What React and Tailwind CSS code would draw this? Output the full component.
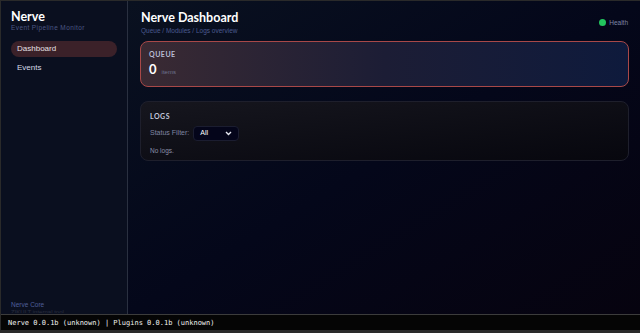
export default function App() {
  return (
    <div className="w-[640px] h-[333px] flex flex-col bg-[#2a2a2a] overflow-hidden" style={{ fontFamily: '"Liberation Sans", Arial, sans-serif' }}>
      <div className="flex flex-1 min-h-0 ml-[1px] mt-[1px]">
        <aside className="w-[127px] shrink-0 bg-[#0a0f1f] border-r border-[#2a3040] flex flex-col px-[10px] pt-[9px] relative">
          <div className="text-white font-bold text-[12.5px] leading-[13px]" style={{ fontFamily: 'Lato, sans-serif' }}>Nerve</div>
          <div className="text-[#4a5784] text-[6.5px] leading-[9px] tracking-[0.4px]">Event Pipeline Monitor</div>
          <nav className="mt-[9px] flex flex-col gap-[3px]">
            <div className="h-[16px] rounded-full bg-[#3b2129] text-[#e6e0e4] text-[8px] flex items-center pl-[6px]">Dashboard</div>
            <div className="h-[16px] text-[#d6dae6] text-[8px] flex items-center pl-[6px]">Events</div>
          </nav>
          <div className="mt-auto mb-[1px] relative">
            <div className="text-[#4f5f9a] text-[6.5px] leading-[8px]">Nerve Core</div>
            <div className="text-[#2a2f40] text-[6px] leading-[6px] h-[4px] overflow-hidden">ZIKULT internal tool</div>
          </div>
        </aside>
        <main className="flex-1 bg-gradient-to-br from-[#0a1120] via-[#04071a] to-[#06030f] px-[12px] pt-[9px] pr-[11px]">
          <div className="flex items-start justify-between">
            <div className="pl-[1px]">
              <div className="text-white font-bold text-[12.5px] leading-[16px]" style={{ fontFamily: 'Lato, sans-serif' }}>Nerve Dashboard</div>
              <div className="text-[#4b5a8f] text-[6.5px] leading-[9px]">Queue / Modules / Logs overview</div>
            </div>
            <div className="flex items-center gap-[3px] mt-[8px] mr-[1px]">
              <span className="w-[7px] h-[7px] rounded-full bg-[#22c55e]"></span>
              <span className="text-[#7d86a6] text-[6.5px]">Health</span>
            </div>
          </div>
          <section className="mt-[6px] h-[46px] rounded-[8px] border border-[#a84848] bg-gradient-to-r from-[#3a2a33] via-[#1c1d35] to-[#0e1a3c] px-[8px] pt-[7px]">
            <div className="text-[#b8bcd4] font-bold text-[7px] leading-[10px] tracking-[0.5px]" style={{ fontFamily: 'Lato, sans-serif' }}>QUEUE</div>
            <div className="flex items-baseline gap-[5px] mt-[2px]">
              <span className="text-white font-bold text-[13px] leading-[16px]" style={{ fontFamily: 'Lato, sans-serif' }}>0</span>
              <span className="text-[#6e7390] text-[6px]">items</span>
            </div>
          </section>
          <section className="mt-[14px] h-[60px] rounded-[8px] border border-[#1e1f2c] bg-gradient-to-br from-[#16161e] to-[#07070e] px-[9px] pt-[9px]">
            <div className="text-[#c4c8dc] font-bold text-[7px] leading-[10px] tracking-[0.5px]" style={{ fontFamily: 'Lato, sans-serif' }}>LOGS</div>
            <div className="flex items-center gap-[4px] mt-[5px]">
              <span className="text-[#7f85a2] text-[7px]">Status Filter:</span>
              <div className="w-[46px] h-[15px] rounded-[4px] bg-[#04051a] border border-[#1b1d30] flex items-center justify-between px-[6px]">
                <span className="text-white text-[7px]">All</span>
                <svg width="7" height="5" viewBox="0 0 7 5"><path d="M1 1 L3.5 3.5 L6 1" stroke="#e5e7f0" strokeWidth="1.4" fill="none" /></svg>
              </div>
            </div>
            <div className="text-[#8a8fa8] text-[6.5px] mt-[5px]">No logs.</div>
          </section>
        </main>
      </div>
      <footer className="h-[16px] mb-[3px] ml-[1px] border-t border-[#3c3c3c] bg-[#050505] flex items-center px-[7px]">
        <span className="text-[#f2f2f2] text-[7px] leading-[10px]" style={{ fontFamily: '"DejaVu Sans Mono", monospace' }}>Nerve 0.0.1b (unknown) | Plugins 0.0.1b (unknown)</span>
      </footer>
    </div>
  );
}
